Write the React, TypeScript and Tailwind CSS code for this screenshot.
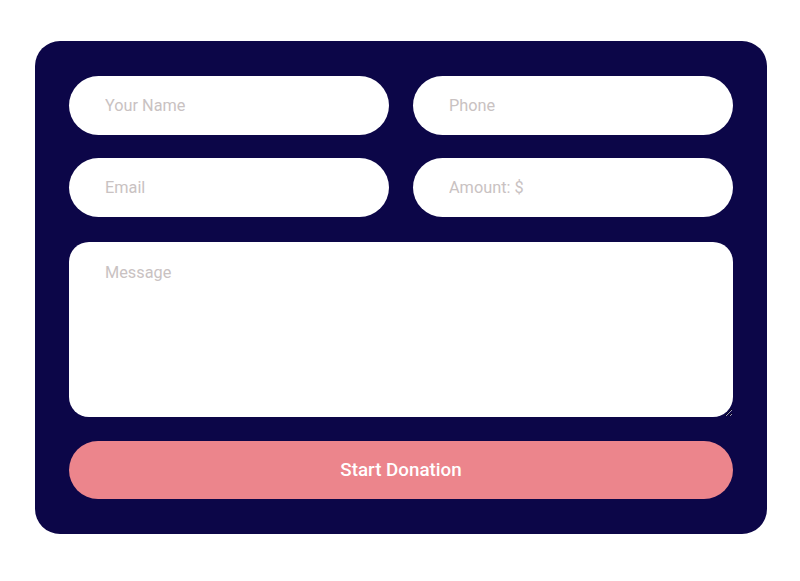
import React from "react";

export default function App() {
  const inputCls =
    "h-[59px] w-full rounded-full bg-white px-[36px] text-[16.3px] text-gray-800 outline-none placeholder:text-[#c9c2c2]";
  return (
    <div className="min-h-[581px] w-[800px] bg-white pt-[41px] pl-[35px]" style={{ fontFamily: "Roboto, 'Liberation Sans', sans-serif" }}>
      <form className="flex w-[732px] flex-col rounded-[25px] bg-[#0c0648] px-[34px] pt-[35px] pb-[35px]" onSubmit={(e) => e.preventDefault()}>
        <div className="mb-[23px] grid grid-cols-2 gap-[24px]">
          <input className={inputCls} placeholder="Your Name" />
          <input className={inputCls} placeholder="Phone" />
        </div>
        <div className="mb-[25px] grid grid-cols-2 gap-[24px]">
          <input className={inputCls} placeholder="Email" />
          <input className={inputCls} placeholder="Amount: $" />
        </div>
        <textarea
          className="mb-[24px] block h-[175px] w-full rounded-[20px] bg-white px-[36px] pt-[19px] text-[16.3px] leading-[24px] text-gray-800 outline-none placeholder:text-[#c9c2c2]"
          placeholder="Message"
        />
        <button
          type="submit"
          className="h-[58px] w-full rounded-full bg-[#ec858c] text-[18.8px] font-medium text-white"
        >
          Start Donation
        </button>
      </form>
    </div>
  );
}
